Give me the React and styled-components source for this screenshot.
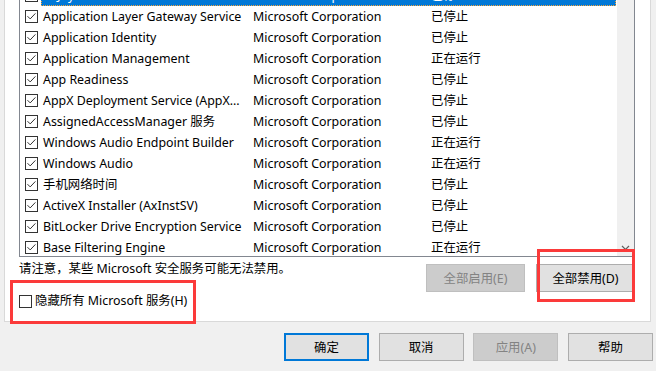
import React from 'react';
import styled, { createGlobalStyle } from 'styled-components';

const Global = createGlobalStyle`
  html, body { margin: 0; padding: 0; background: #f0f0f0; overflow: hidden; }
  body {
    font-family: "Noto Sans", "Noto Sans CJK SC", sans-serif;
    font-size: 12.4px;
    color: #000;
  }
`;

const Window = styled.div`
  width: 656px;
  height: 371px;
  overflow: hidden;
  background: #f0f0f0;
  display: flex;
  flex-direction: column;
`;

const TabPage = styled.div`
  box-sizing: border-box;
  margin: -20px 5px 0 4px;
  height: 342px;
  background: #fff;
  border: 1px solid #d9d9d9;
  padding: 18px 15px 0 14px;
  display: flex;
  flex-direction: column;
`;

const ListBox = styled.div`
  box-sizing: border-box;
  height: 258px;
  border: 1px solid #828790;
  display: flex;
  overflow: hidden;
  background: #fff;
`;

const Rows = styled.div`
  flex: 1;
  margin-top: -15px;
  padding-right: 1px;
  display: flex;
  flex-direction: column;
`;

const Row = styled.div`
  display: flex;
  height: 21px;
  flex: none;
  align-items: stretch;
`;

const CheckCell = styled.div`
  width: 21px;
  flex: none;
  display: flex;
  align-items: center;
  padding-left: 5px;
  box-sizing: border-box;
`;

const Cells = styled.div`
  flex: 1;
  display: flex;
  box-sizing: border-box;
  background: ${p => (p.$selected ? '#0078d7' : 'transparent')};
  color: ${p => (p.$selected ? '#fff' : '#000')};
  outline: ${p => (p.$selected ? '1px dotted #f7a43a' : 'none')};
  outline-offset: -1px;
`;

const Cell = styled.div`
  width: ${p => (p.$w ? `${p.$w}px` : 'auto')};
  flex: ${p => (p.$w ? 'none' : '1')};
  padding-left: 2px;
  box-sizing: border-box;
  line-height: 21px;
  white-space: nowrap;
  overflow: hidden;
`;

const ScrollBar = styled.div`
  width: 17px;
  flex: none;
  background: #f0f0f0;
  display: flex;
  flex-direction: column;
  justify-content: flex-end;
`;

const ScrollArrow = styled.div`
  height: 17px;
  display: flex;
  align-items: center;
  justify-content: center;
`;

const Footer = styled.div`
  display: flex;
  justify-content: space-between;
`;

const FooterLeft = styled.div`
  display: flex;
  flex-direction: column;
`;

const Note = styled.div`
  margin-top: 4px;
  line-height: 16px;
`;

const Annotated = styled.div`
  position: relative;
  &::after {
    content: '';
    position: absolute;
    left: ${p => p.$l}px;
    top: ${p => p.$t}px;
    right: ${p => p.$r}px;
    bottom: ${p => p.$b}px;
    border: 3px solid #fb3a3a;
    pointer-events: none;
  }
`;

const CheckWrap = styled.div`
  margin-top: 16px;
  display: flex;
`;

const CheckLabel = styled.label`
  display: flex;
  align-items: center;
  gap: 3px;
  line-height: 16px;
  height: 16px;
`;

const FooterButtons = styled.div`
  margin-top: 7px;
  display: flex;
  gap: 11px;
  align-items: flex-start;
`;

const Button = styled.div`
  box-sizing: border-box;
  width: ${p => p.$w}px;
  height: 28px;
  display: flex;
  align-items: center;
  justify-content: center;
  background: ${p => (p.$disabled ? '#cccccc' : '#e1e1e1')};
  color: ${p => (p.$disabled ? '#838383' : '#000')};
  border: ${p => (p.$default ? '2px solid #0078d7' : p.$disabled ? '1px solid #bfbfbf' : '1px solid #adadad')};
`;

const ButtonBar = styled.div`
  margin-top: 11px;
  padding-right: 3px;
  display: flex;
  justify-content: flex-end;
  gap: 9.7px;
`;

const CheckBox = ({ checked }) => (
  <svg width="13" height="13" viewBox="0 0 13 13" style={{ display: 'block', flex: 'none' }}>
    <rect x="0.5" y="0.5" width="12" height="12" fill="#fff" stroke="#333" />
    {checked && (
      <path d="M2.5 6.2 L5.2 8.9 L10.4 3.4" fill="none" stroke="#333" strokeWidth="1" />
    )}
  </svg>
);

const services = [
  ['AllJoyn Router Service', '已停止', true],
  ['Application Layer Gateway Service', '已停止'],
  ['Application Identity', '已停止'],
  ['Application Management', '正在运行'],
  ['App Readiness', '已停止'],
  ['AppX Deployment Service (AppX...', '已停止'],
  ['AssignedAccessManager 服务', '已停止'],
  ['Windows Audio Endpoint Builder', '正在运行'],
  ['Windows Audio', '正在运行'],
  ['手机网络时间', '已停止'],
  ['ActiveX Installer (AxInstSV)', '已停止'],
  ['BitLocker Drive Encryption Service', '已停止'],
  ['Base Filtering Engine', '正在运行'],
];

export default function App() {
  return (
    <>
      <Global />
      <Window>
        <TabPage>
          <ListBox>
            <Rows>
              {services.map(([name, status, sel]) => (
                <Row key={name}>
                  <CheckCell>
                    <CheckBox checked />
                  </CheckCell>
                  <Cells $selected={sel}>
                    <Cell $w={210}>{name}</Cell>
                    <Cell $w={178}>Microsoft Corporation</Cell>
                    <Cell>{status}</Cell>
                  </Cells>
                </Row>
              ))}
            </Rows>
            <ScrollBar>
              <ScrollArrow>
                <svg width="9" height="6" viewBox="0 0 9 6">
                  <path d="M1 1 L4.5 4.5 L8 1" fill="none" stroke="#606060" strokeWidth="1.2" />
                </svg>
              </ScrollArrow>
            </ScrollBar>
          </ListBox>
          <Footer>
            <FooterLeft>
              <Note>请注意，某些 Microsoft 安全服务可能无法禁用。</Note>
              <CheckWrap>
                <Annotated $l={-9} $t={-13} $r={-9} $b={-15}>
                  <CheckLabel>
                    <CheckBox />
                    <span>隐藏所有 Microsoft 服务(H)</span>
                  </CheckLabel>
                </Annotated>
              </CheckWrap>
            </FooterLeft>
            <FooterButtons>
              <Button $w={99} $disabled>全部启用(E)</Button>
              <Annotated $l={1} $t={-15} $r={0} $b={-10}>
                <Button $w={99}>全部禁用(D)</Button>
              </Annotated>
            </FooterButtons>
          </Footer>
        </TabPage>
        <ButtonBar>
          <Button $w={85} $default>确定</Button>
          <Button $w={85}>取消</Button>
          <Button $w={85} $disabled>应用(A)</Button>
          <Button $w={85}>帮助</Button>
        </ButtonBar>
      </Window>
    </>
  );
}
